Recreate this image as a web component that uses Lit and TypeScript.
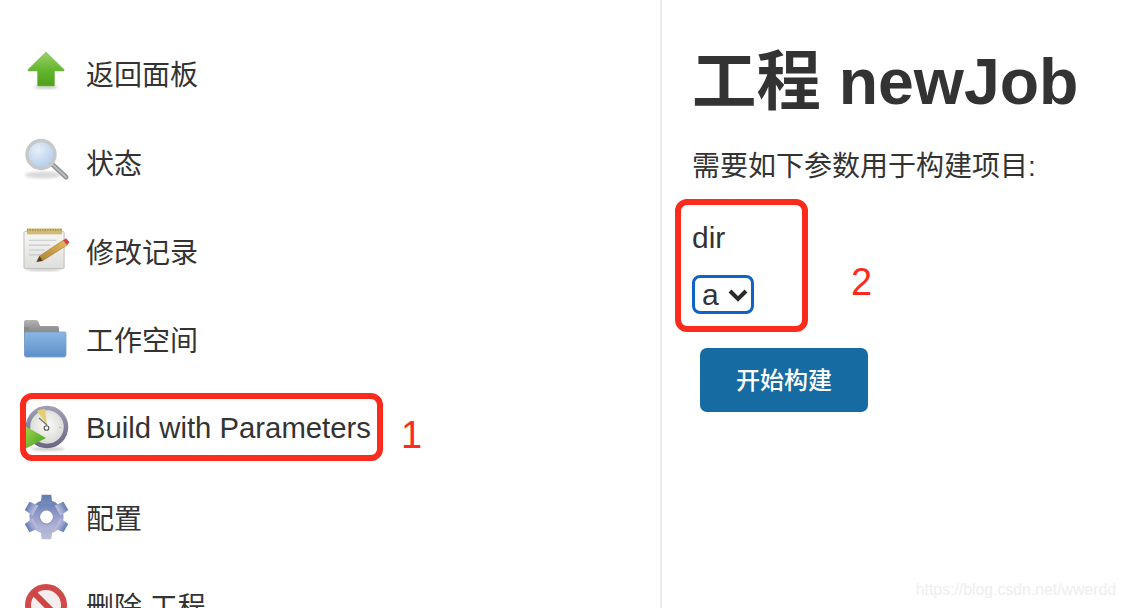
import { LitElement, html, css, svg } from "lit";
import { customElement } from "lit/decorators.js";

const arrow = svg`<svg width="48" height="48" viewBox="0 0 48 48">
<defs><linearGradient id="ga" x1="0" y1="0" x2="0" y2="1"><stop offset="0" stop-color="#9ccf6a"/><stop offset=".55" stop-color="#62b52c"/><stop offset="1" stop-color="#4f9f1c"/></linearGradient>
<filter id="b1"><feGaussianBlur stdDeviation="1.400"/></filter></defs>
<ellipse cx="23" cy="38" rx="12" ry="2" fill="#999" opacity=".5" filter="url(#b1)"/>
<path d="M23 3 L41 20.500 V22 H31.500 V37 H14.500 V22 H5 V20.500 Z" fill="url(#ga)" stroke="#7fb95a" stroke-width=".6"/></svg>`;

const search = svg`<svg width="48" height="48" viewBox="0 0 48 48">
<defs><radialGradient id="gs" cx=".4" cy=".35" r=".8"><stop offset="0" stop-color="#e6eff9"/><stop offset="1" stop-color="#a9c5e8"/></radialGradient>
<filter id="b2"><feGaussianBlur stdDeviation="1.600"/></filter></defs>
<ellipse cx="20" cy="37" rx="18" ry="3.500" fill="#aaa" opacity=".45" filter="url(#b2)"/>
<path d="M29 26 L43 39" stroke="#8f9397" stroke-width="5" stroke-linecap="round"/>
<path d="M29 26 L43 39" stroke="#b9bcbf" stroke-width="2" stroke-linecap="round"/>
<circle cx="18" cy="16.500" r="14" fill="url(#gs)" stroke="#c6c8ca" stroke-width="3.400"/></svg>`;

const notepad = svg`<svg width="50" height="48" viewBox="0 0 50 48">
<defs><linearGradient id="gn" x1="0" y1="0" x2="0" y2="1"><stop offset="0" stop-color="#f7f7f5"/><stop offset="1" stop-color="#dedfdc"/></linearGradient>
<filter id="b3"><feGaussianBlur stdDeviation="1.200"/></filter>
<linearGradient id="gp" x1="0" y1="1" x2="1" y2="0"><stop offset="0" stop-color="#a9802f"/><stop offset="1" stop-color="#e9b95c"/></linearGradient></defs>
<ellipse cx="22" cy="43" rx="18" ry="2" fill="#aaa" opacity=".5" filter="url(#b3)"/>
<rect x="2" y="4" width="41" height="38" rx="1.500" fill="url(#gn)" stroke="#bdbdb8"/>
<rect x="5" y="1" width="36" height="6" fill="#cfbb73"/>
<path d="M5 2.500h36" stroke="#a08c44" stroke-width="1.500" stroke-dasharray="1.400 1.200"/>
<path d="M7 13h28M7 18h22M7 23h16M7 28h12" stroke="#c5c7c7" stroke-width="1.200"/>
<path d="M15 35 L18 29 L42 13 L46 18 L21 34 Z" fill="url(#gp)" stroke="#8e6a26" stroke-width=".5"/>
<path d="M15 35 L18 29 L21 34 Z" fill="#4d4029"/>
<path d="M42 13 L45 11 L48.500 15 L46 18 Z" fill="#dc3e45"/></svg>`;

const folder = svg`<svg width="48" height="48" viewBox="0 0 48 48">
<defs><linearGradient id="gf" x1="0" y1="0" x2="0" y2="1"><stop offset="0" stop-color="#8bb6e4"/><stop offset="1" stop-color="#5d90c9"/></linearGradient>
<linearGradient id="gb" x1="0" y1="0" x2="0" y2="1"><stop offset="0" stop-color="#b4b4b4"/><stop offset="1" stop-color="#7c7c7c"/></linearGradient></defs>
<path d="M1 7 Q1 5 3 5 H13 Q15 5 16 8 L17 11 H34 Q36 11 36 13 V20 H1 Z" fill="url(#gb)"/>
<path d="M1 12 H6 V40 H1 Z" fill="#8a8a8a"/>
<path d="M3 17 H42 Q43 17 43 19 V40 Q43 42 41 42 H3 Q1.500 42 1.500 40 V19 Q1.500 17 3 17 Z" fill="url(#gf)" stroke="#7a9fc9" stroke-width=".8"/></svg>`;

const clock = svg`<svg width="48" height="50" viewBox="0 0 48 50">
<defs><radialGradient id="gc" cx=".5" cy=".45" r=".6"><stop offset="0" stop-color="#fbfbf9"/><stop offset="1" stop-color="#d2d2ce"/></radialGradient>
<linearGradient id="gr" x1="0" y1="0" x2="0" y2="1"><stop offset="0" stop-color="#9f9db2"/><stop offset="1" stop-color="#6b6985"/></linearGradient>
<linearGradient id="gt" x1="0" y1="0" x2="1" y2="1"><stop offset="0" stop-color="#a3d54c"/><stop offset="1" stop-color="#3f9f1c"/></linearGradient>
<filter id="b4"><feGaussianBlur stdDeviation="1"/></filter></defs>
<ellipse cx="25" cy="46" rx="17" ry="2" fill="#999" opacity=".45" filter="url(#b4)"/>
<circle cx="24" cy="24" r="19" fill="url(#gc)" stroke="url(#gr)" stroke-width="4.500"/>
<path d="M24 22 L14 8 A19 19 0 0 1 22 6 Z" fill="#e4cf6e"/>
<path d="M24 22 L16 15" stroke="#777" stroke-width="1.400"/>
<circle cx="23.500" cy="25" r="2.300" fill="#fff" stroke="#555" stroke-width="1.100"/>
<circle cx="37" cy="24.500" r=".9" fill="#bbb"/>
<path d="M2 23 L23 35 L2 46 Z" fill="url(#gt)"/></svg>`;

const gear = svg`<svg width="52" height="52" viewBox="1 1 46 46">
<defs><linearGradient id="gg" x1="0" y1="0" x2="0" y2="1"><stop offset="0" stop-color="#5f7cb2"/><stop offset=".55" stop-color="#9ba2cd"/><stop offset="1" stop-color="#bcbfda"/></linearGradient></defs>
<g fill="url(#gg)"><circle cx="24" cy="24" r="16"/>
<path d="M19.500 3h9l1 9h-11zM19.500 45h9l1-9h-11z"/>
<path d="M19.500 3h9l1 9h-11z" transform="rotate(60 24 24)"/>
<path d="M19.500 3h9l1 9h-11z" transform="rotate(120 24 24)"/>
<path d="M19.500 3h9l1 9h-11z" transform="rotate(240 24 24)"/>
<path d="M19.500 3h9l1 9h-11z" transform="rotate(300 24 24)"/></g>
<circle cx="24" cy="24" r="6.500" fill="#fff" stroke="#8a8fb8" stroke-width="1"/></svg>`;

const noEntry = svg`<svg width="48" height="48" viewBox="0 0 48 48">
<circle cx="23" cy="24" r="18" fill="#f4eeee" stroke="#cf4b4b" stroke-width="6"/>
<path d="M10 11 L36 37" stroke="#cf4444" stroke-width="6"/></svg>`;

const items = [
  { icon: arrow, label: "返回面板" },
  { icon: search, label: "状态" },
  { icon: notepad, label: "修改记录" },
  { icon: folder, label: "工作空间" },
  { icon: clock, label: "Build with Parameters", latin: true },
  { icon: gear, label: "配置" },
  { icon: noEntry, label: "删除 工程" },
];

@customElement("app-root")
export class AppRoot extends LitElement {
  static styles = css`
    :host {
      display: block;
      position: relative;
      width: 1124px;
      height: 608px;
      overflow: hidden;
      background: #fff;
      color: #333;
      font-family: "Liberation Sans", "Noto Sans CJK SC", sans-serif;
    }
    .page { display: flex; height: 608px; }
    .side {
      width: 662px;
      flex: none;
      box-sizing: border-box;
      border-right: 2px solid #e9edf1;
      padding: 29px 0 0 22px;
    }
    .item {
      display: flex;
      align-items: center;
      gap: 15px;
      height: 88.700px;
      font-size: 28px;
      white-space: nowrap;
    }
    .latin { font-size: 29.300px; }
    .icon { width: 49px; flex: none; display: flex; justify-content: center; }
    .icon svg { display: block; }
    .main { flex: 1; padding: 40px 0 0 30px; min-width: 0; }
    h1 {
      margin: 0;
      font-size: 64.400px;
      line-height: 84px;
      font-weight: 700;
      white-space: nowrap;
    }
    .lead { margin: 23px 0 0; font-size: 28px; line-height: 40px; white-space: nowrap; }
    .param { font-size: 30px; line-height: 40px; margin-top: 31px; }
    .select {
      display: flex;
      align-items: center;
      gap: 8px;
      box-sizing: border-box;
      width: 62px;
      height: 39px;
      margin-top: 17px;
      padding-left: 7px;
      border: 3.500px solid #0f62c6;
      border-radius: 8px;
      font-size: 30px;
      line-height: 30px;
      color: #333;
    }
    .select svg { flex: none; }
    button {
      display: block;
      margin: 34px 0 0 8px;
      padding: 0 0 4px;
      width: 168px;
      height: 64px;
      border: 0;
      border-radius: 7px;
      background: #156ba2;
      color: #fff;
      font: 500 24px "Noto Sans CJK SC", sans-serif;
    }
    .mark {
      position: absolute;
      box-sizing: border-box;
      border: 6px solid #fb2b1e;
      border-radius: 12px;
    }
    .m1 { left: 20px; top: 393px; width: 363px; height: 68px; }
    .m2 { left: 675px; top: 199px; width: 133px; height: 133px; }
    .num {
      position: absolute;
      color: #fb2b1e;
      font-size: 38px;
      line-height: 44px;
      font-family: "Liberation Sans", sans-serif;
    }
    .n1 { left: 401px; top: 413px; }
    .n2 { left: 851px; top: 260px; }
    .wm {
      position: absolute;
      right: 8px;
      top: 580px;
      font-size: 15.800px;
      line-height: 20px;
      color: #eeeeee;
      white-space: nowrap;
    }
  `;

  render() {
    return html`
      <div class="page">
        <nav class="side">
          ${items.map(
            (i) => html`<div class="item"><span class="icon">${i.icon}</span><span class=${i.latin ? "latin" : ""}>${i.label}</span></div>`
          )}
        </nav>
        <main class="main">
          <h1>工程 newJob</h1>
          <p class="lead">需要如下参数用于构建项目:</p>
          <div class="param">dir</div>
          <div class="select">
            <span>a</span>
            <svg width="22" height="14" viewBox="0 0 22 14"><path d="M3 3 L11 11 L19 3" fill="none" stroke="#2b2b2b" stroke-width="4"/></svg>
          </div>
          <button>开始构建</button>
        </main>
      </div>
      <div class="mark m1"></div>
      <div class="mark m2"></div>
      <div class="num n1">1</div>
      <div class="num n2">2</div>
      <div class="wm">https://blog.csdn.net/wwerdd</div>
    `;
  }
}
